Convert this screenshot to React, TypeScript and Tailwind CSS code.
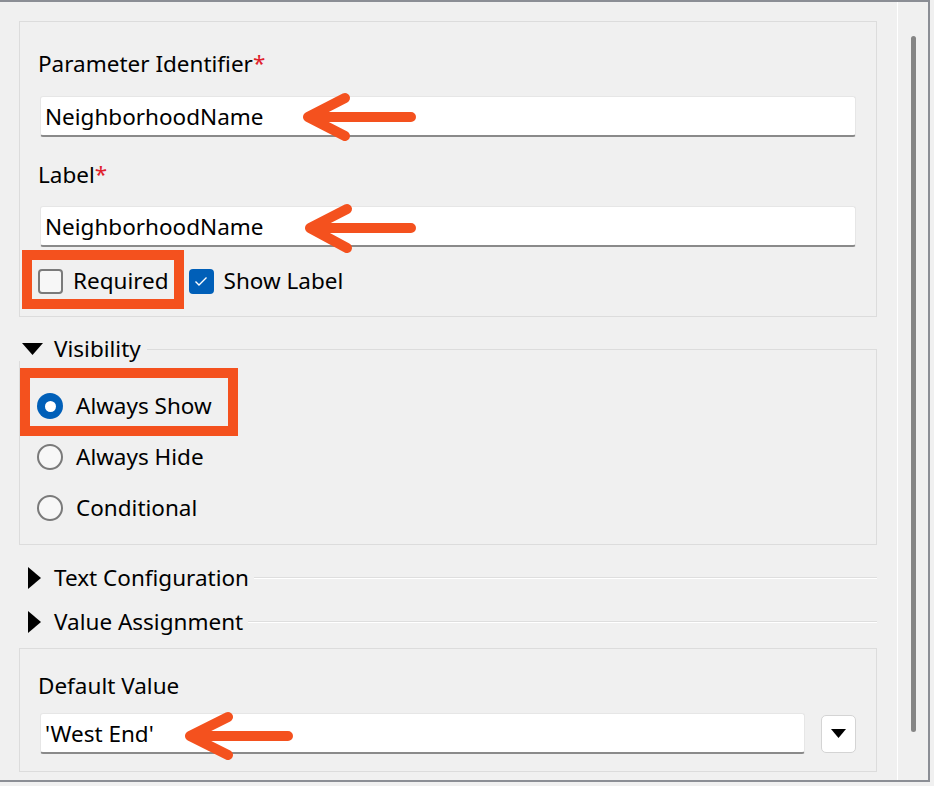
import React from "react";

const font = { fontFamily: '"Noto Sans", "Open Sans", sans-serif' };

const TextField: React.FC<{ value: string; className?: string }> = ({ value, className }) => (
  <div
    className={`h-[41px] bg-white border border-[#e6e6e6] border-b-2 border-b-[#8a8a8a] rounded-[3px] flex items-center pl-[4px] pt-[2px] text-[22.5px] text-black ${className ?? ""}`}
  >
    {value}
  </div>
);

const Check: React.FC<{ checked?: boolean }> = ({ checked }) =>
  checked ? (
    <span className="w-[25px] h-[25px] rounded-[4px] bg-[#005fb8] flex items-center justify-center">
      <svg width="14" height="11" viewBox="0 0 14 11" fill="none">
        <path d="M1.5 5.5 L5 9 L12.5 1.5" stroke="white" strokeWidth="1.4" />
      </svg>
    </span>
  ) : (
    <span className="w-[25px] h-[25px] rounded-[4px] border-2 border-[#7a7a7a] bg-[#f7f7f7]" />
  );

const Radio: React.FC<{ checked?: boolean }> = ({ checked }) =>
  checked ? (
    <span className="w-[26px] h-[26px] rounded-full bg-[#005fb8] flex items-center justify-center">
      <span className="w-[11px] h-[11px] rounded-full bg-white" />
    </span>
  ) : (
    <span className="w-[26px] h-[26px] rounded-full border-2 border-[#7a7a7a] bg-[#f7f7f7]" />
  );

const Collapsed: React.FC<{ title: string; className?: string }> = ({ title, className }) => (
  <div className={`h-[24px] flex items-center ${className ?? ""}`}>
    <svg width="13" height="22" viewBox="0 0 13 22" className="ml-[9px] mr-[13px]">
      <path d="M0 0 L13 11 L0 22 Z" fill="black" />
    </svg>
    <span className="text-[22.5px] text-black leading-none">{title}</span>
    <div className="flex-1 ml-[5px] border-t border-t-[#dedede] border-b border-b-white h-0 self-center" />
  </div>
);

export default function App() {
  return (
    <div className="w-[934px] h-[786px] bg-[#f0f0f0] relative" style={font}>
      <div className="w-[930px] h-[782px] border-t-2 border-r-2 border-b-2 border-[#8b8e95] flex">
        {/* scrolling form area */}
        <div className="w-[897px] pl-[19px] pr-[20px] pt-[19px] flex flex-col">
          <div className="border border-[#dcdcdc] px-[20px] pt-[28px] pb-[21px] flex flex-col">
            <div className="h-[28px] flex items-center text-[22.5px] text-black -ml-[2px]">
              Parameter Identifier<span className="text-[#e0202a] self-start -mt-[4px]">*</span>
            </div>
            <TextField value="NeighborhoodName" className="mt-[18px]" />
            <div className="h-[28px] flex items-center text-[22.5px] text-black -ml-[2px] mt-[24px]">
              Label<span className="text-[#e0202a] self-start -mt-[4px]">*</span>
            </div>
            <TextField value="NeighborhoodName" className="mt-[17px]" />
            <div className="h-[28px] flex items-center mt-[20px] -ml-[2px] text-[22.5px] text-black">
              <Check />
              <span className="ml-[10px]">Required</span>
              <span className="ml-[20px] flex items-center">
                <Check checked />
              </span>
              <span className="ml-[10px]">Show Label</span>
            </div>
          </div>

          {/* Visibility group */}
          <div className="mt-[20px] h-[24px] flex items-end">
            <div className="h-[24px] flex items-center">
              <svg width="21" height="12" viewBox="0 0 21 12" className="ml-[3px] mr-[11px]">
                <path d="M0 0 L21 0 L10.5 12 Z" fill="black" />
              </svg>
              <span className="text-[22.5px] text-black leading-none">Visibility</span>
            </div>
            <div className="flex-1 ml-[6px] h-[12px] border-t border-r border-[#dcdcdc]" />
          </div>
          <div className="border-l border-r border-b border-[#dcdcdc] pt-[31px] pb-[22px] pl-[17px] flex flex-col gap-[23px] text-[22.5px] text-black">
            <div className="h-[28px] flex items-center">
              <Radio checked />
              <span className="ml-[13px]">Always Show</span>
            </div>
            <div className="h-[28px] flex items-center">
              <Radio />
              <span className="ml-[13px]">Always Hide</span>
            </div>
            <div className="h-[28px] flex items-center">
              <Radio />
              <span className="ml-[13px]">Conditional</span>
            </div>
          </div>

          <Collapsed title="Text Configuration" className="mt-[21px]" />
          <Collapsed title="Value Assignment" className="mt-[20px]" />

          <div className="mt-[14px] border border-[#dcdcdc] px-[20px] pt-[23px] pb-[17px] flex flex-col">
            <div className="h-[28px] flex items-center text-[22.5px] text-black -ml-[2px]">Default Value</div>
            <div className="mt-[13px] flex items-center">
              <TextField value="'West End'" className="flex-1" />
              <button className="ml-[16px] w-[35px] h-[38px] bg-white border border-[#d4d4d4] rounded-[5px] flex items-center justify-center">
                <svg width="15" height="9" viewBox="0 0 15 9">
                  <path d="M0 0 L15 0 L7.5 9 Z" fill="black" />
                </svg>
              </button>
            </div>
          </div>
        </div>

        {/* scrollbar */}
        <div className="flex-1 border-l border-white flex justify-center pt-[34px]">
          <div className="w-[5px] h-[696px] rounded-full bg-[#858585] ml-[1px]" />
        </div>
      </div>

      {/* callout highlights */}
      <div className="absolute left-[22px] top-[250px] w-[162px] h-[59px] border-[10px] border-[#f4511e] pointer-events-none" />
      <div className="absolute left-[20px] top-[368px] w-[218px] h-[68px] border-[10px] border-[#f4511e] pointer-events-none" />
      <svg className="absolute left-0 top-0 pointer-events-none" width="934" height="786" fill="none">
        <g stroke="#f4511e" strokeWidth="10" strokeLinecap="round" strokeLinejoin="round">
          <path d="M411 117 L308 117 M345 98 L308 117 L345 136" />
          <path d="M411 228 L310 228 M347 209 L310 228 L347 248" />
          <path d="M288 736 L190 736 M228 717 L190 736 L228 755" />
        </g>
      </svg>
    </div>
  );
}
